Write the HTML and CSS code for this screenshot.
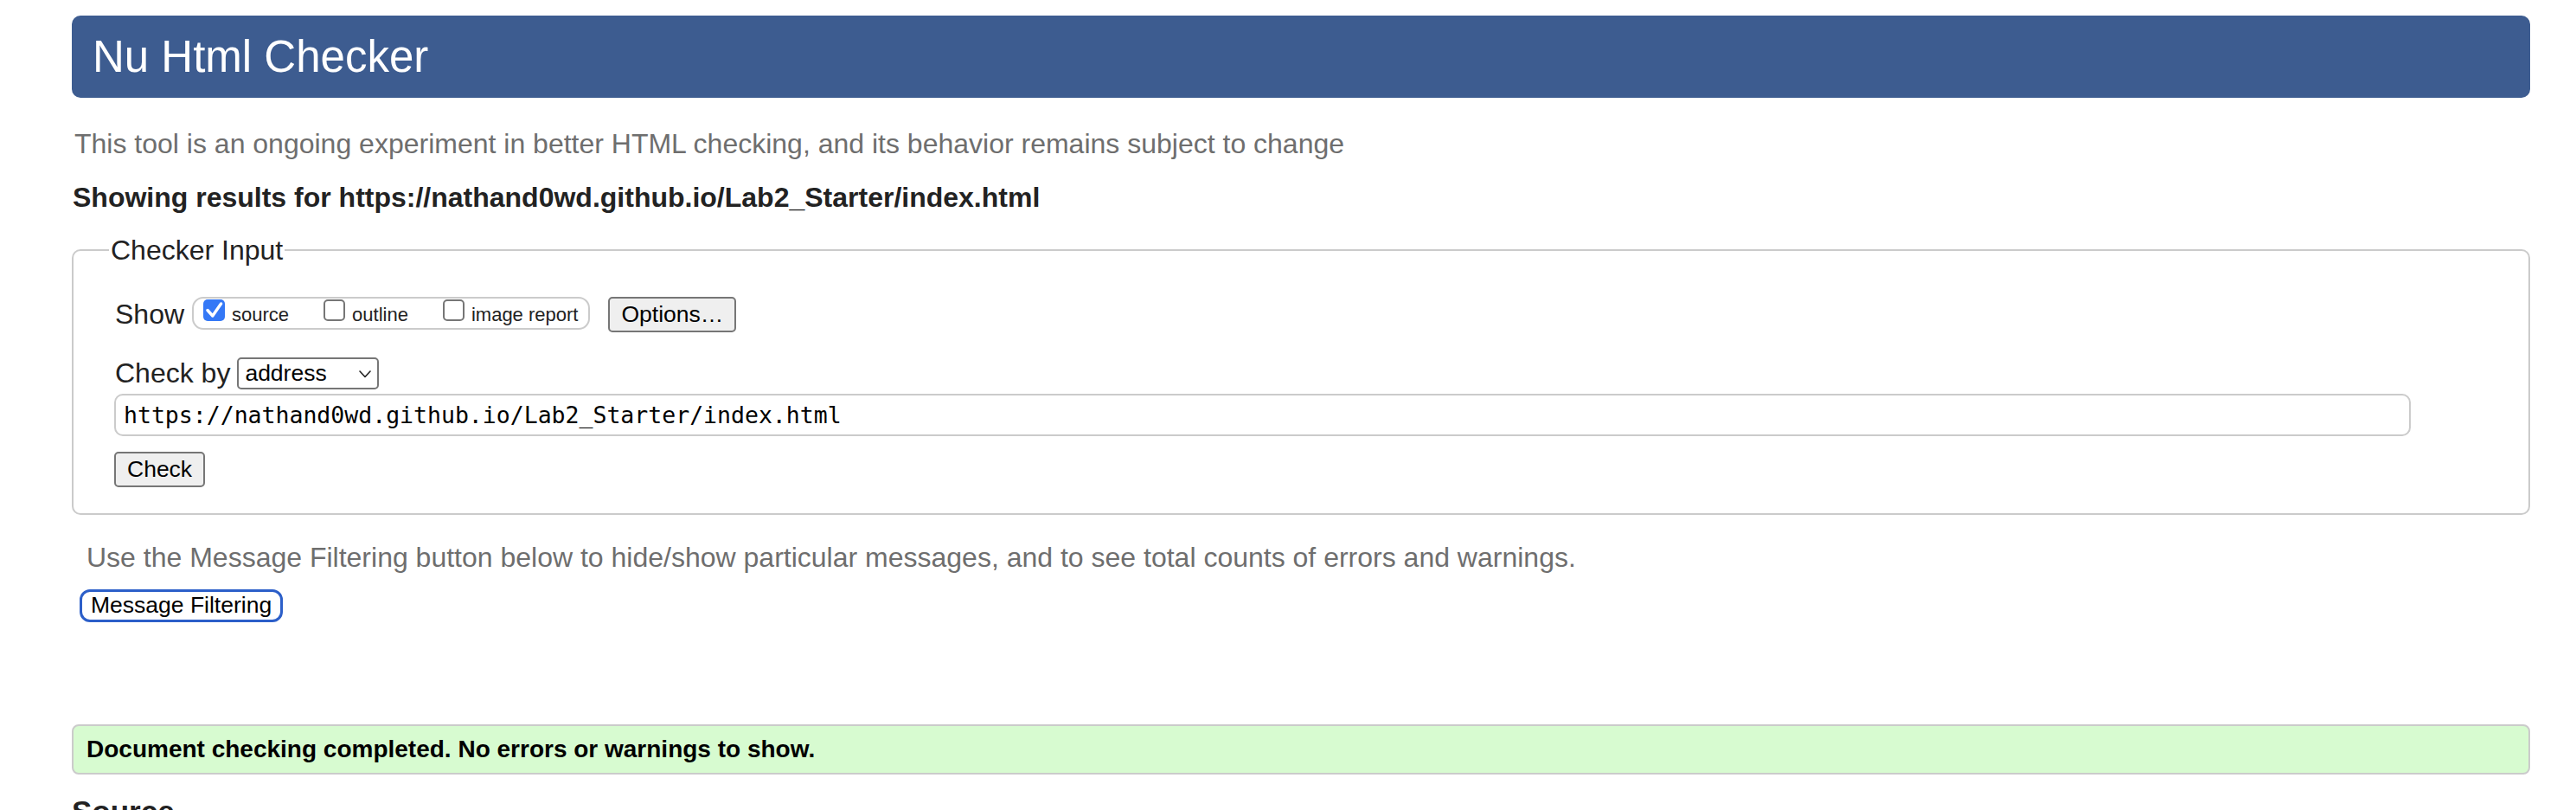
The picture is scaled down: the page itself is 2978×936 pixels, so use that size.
FILE: index.html
```html
<!DOCTYPE html>
<html lang="en">
<head>
<meta charset="utf-8">
<title>Nu Html Checker</title>
<link rel="stylesheet" href="styles.css">
</head>
<body>
<h1 class="masthead">Nu Html Checker</h1>
<p class="intro">This tool is an ongoing experiment in better HTML checking, and its behavior remains subject to change</p>
<p class="results">Showing results for https://nathand0wd.github.io/Lab2_Starter/index.html</p>

<fieldset class="checker">
  <legend class="checker-legend">Checker Input</legend>
  <div class="show-row">
    <span class="row-label">Show</span>
    <span class="show-opts">
      <label class="opt"><span class="cb cb-on"><svg viewBox="0 0 25 25" width="25" height="25"><path d="M5 12.5 L10.8 19 L20.5 5" fill="none" stroke="#fff" stroke-width="3.4" stroke-linecap="round" stroke-linejoin="round"/></svg></span><span class="opt-text">source</span></label>
      <label class="opt"><span class="cb"></span><span class="opt-text">outline</span></label>
      <label class="opt opt-last"><span class="cb"></span><span class="opt-text">image report</span></label>
    </span>
    <button class="btn btn-options" type="button">Options…</button>
  </div>
  <div class="checkby-row">
    <span class="row-label">Check by</span>
    <span class="select-wrap">
      <select class="select"><option>address</option></select>
      <svg class="chevron" viewBox="0 0 14 9" width="14" height="9"><path d="M1 1 L7 7.5 L13 1" fill="none" stroke="#222" stroke-width="1.6" stroke-linecap="round" stroke-linejoin="round"/></svg>
    </span>
  </div>
  <input class="url" type="text" value="https://nathand0wd.github.io/Lab2_Starter/index.html">
  <button class="btn btn-check" type="button">Check</button>
</fieldset>

<p class="filter-note">Use the Message Filtering button below to hide/show particular messages, and to see total counts of errors and warnings.</p>
<button class="btn-filter" type="button">Message Filtering</button>

<div class="success">Document checking completed. No errors or warnings to show.</div>
<h2 class="source-title">Source</h2>
</body>
</html>
```

FILE: styles.css
```css
html, body {
  background: #fff;
}
body {
  margin: 0;
  padding: 18px 53px 0 83px;
  font-family: "Liberation Sans", Arial, Helvetica, sans-serif;
  color: #222;
  overflow: hidden;
}
.masthead {
  margin: 0;
  height: 95px;
  line-height: 95px;
  padding-left: 24px;
  background: #3d5c90;
  color: #fff;
  border-radius: 10px;
  font-size: 51px;
  font-weight: normal;
}
.intro {
  margin: 34.5px 0 0 3px;
  font-size: 32px;
  color: #6e6e6e;
}
.results {
  margin: 25px 0 0 1px;
  font-size: 32px;
  font-weight: bold;
  color: #222;
}
.checker {
  margin: 24px 0 0;
  border: 2px solid #cbcbcb;
  border-radius: 10px;
  padding: 0 135px 30px 48px;
  min-width: 0;
}
.checker-legend {
  font-size: 32px;
  padding: 0 2px;
  margin-left: -7px;
  color: #222;
}
.show-row {
  display: flex;
  align-items: center;
  margin-top: 35px;
  height: 41px;
}
.row-label {
  font-size: 32px;
  color: #222;
}
.show-opts {
  display: inline-flex;
  align-items: flex-start;
  box-sizing: border-box;
  height: 38px;
  margin-left: 9px;
  padding: 0 12px 0 11px;
  border: 2px solid #cbcbcb;
  border-radius: 13px;
  margin-top: -3px;
}
.opt {
  display: inline-flex;
  align-items: flex-start;
  margin-right: 40px;
}
.opt-last {
  margin-right: 0;
}
.cb {
  box-sizing: border-box;
  width: 25px;
  height: 25px;
  margin-top: 1px;
  margin-right: 8px;
  border: 2px solid #767676;
  border-radius: 5px;
  background: #fff;
}
.cb svg {
  display: block;
}
.cb-on {
  border: none;
  background: #3478f6;
}
.opt-text {
  padding-top: 6px;
  font-size: 22px;
  line-height: 25px;
  color: #222;
}
.btn {
  box-sizing: border-box;
  height: 41px;
  padding: 0 13px;
  font-family: "Liberation Sans", Arial, Helvetica, sans-serif;
  font-size: 26.5px;
  color: #000;
  background: #efefef;
  border: 2px solid #767676;
  border-radius: 5px;
}
.btn-options {
  margin-left: 21px;
}
.checkby-row {
  display: flex;
  align-items: center;
  margin-top: 29px;
  height: 37px;
}
.select-wrap {
  position: relative;
  margin-left: 8px;
}
.select {
  -webkit-appearance: none;
  appearance: none;
  display: block;
  box-sizing: border-box;
  width: 164px;
  height: 37px;
  padding: 0 0 0 7px;
  font-family: "Liberation Sans", Arial, Helvetica, sans-serif;
  font-size: 26.5px;
  color: #000;
  background: #fff;
  border: 2px solid #767676;
  border-radius: 5px;
}
.chevron {
  position: absolute;
  right: 9px;
  top: 15px;
}
.url {
  display: block;
  box-sizing: border-box;
  width: 100%;
  height: 49px;
  margin: 5px 0 0 -1px;
  padding: 0 9px;
  font-family: "DejaVu Sans Mono", "Liberation Mono", monospace;
  font-size: 26.5px;
  color: #000;
  background: #fff;
  border: 2px solid #cbcbcb;
  border-radius: 10px;
}
.btn-check {
  display: block;
  margin: 18px 0 0 -1px;
}
.filter-note {
  margin: 31.5px 0 0 17px;
  font-size: 32px;
  color: #6e6e6e;
}
.btn-filter {
  display: block;
  box-sizing: border-box;
  height: 38px;
  margin: 17.5px 0 0 9px;
  padding: 0 10px;
  font-family: "Liberation Sans", Arial, Helvetica, sans-serif;
  font-size: 26.5px;
  color: #000;
  background: #fff;
  border: 3.5px solid #2c5fc9;
  border-radius: 12px;
}
.success {
  margin-top: 118px;
  box-sizing: border-box;
  height: 58px;
  line-height: 54px;
  padding-left: 15px;
  background: #d7fbd0;
  border: 2px solid #cbcbcb;
  border-radius: 8px;
  font-size: 28px;
  font-weight: bold;
  color: #000;
}
.source-title {
  margin: 23px 0 0;
  font-size: 35px;
  line-height: 40px;
  font-weight: bold;
  color: #222;
}
```
